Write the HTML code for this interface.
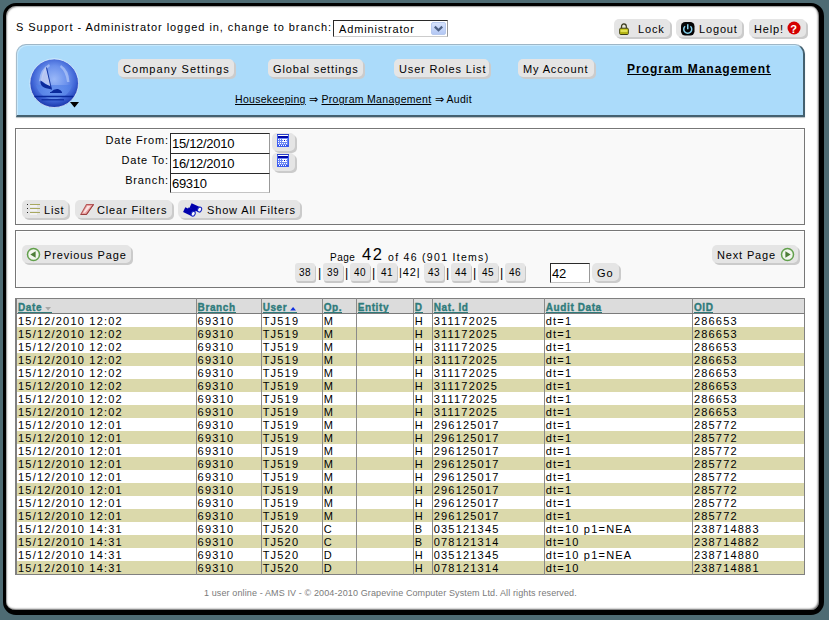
<!DOCTYPE html>
<html><head><meta charset="utf-8">
<style>
*{box-sizing:border-box;margin:0;padding:0}
html,body{width:829px;height:620px;overflow:hidden;background:#4e6b73;font-family:"Liberation Sans",sans-serif;color:#000}
.abs{position:absolute;white-space:nowrap}
#win{position:absolute;left:3px;top:3px;width:821px;height:612px;background:#fff;border:solid #000;border-width:3px 5px 5px 3px;border-radius:13px;box-shadow:inset 1px 1px 1.5px rgba(0,0,0,.4),inset -1px -1px 2px rgba(0,0,0,.6)}
.t11{font-size:11px;letter-spacing:.85px}
.t10{font-size:10px;letter-spacing:.5px}
.btn{position:absolute;background:#e5e5e5;border-radius:5px;box-shadow:2px 2px 0 #cbcbcb;white-space:nowrap;font-size:11px;letter-spacing:.85px;line-height:18px}
#panel{position:absolute;left:16px;top:44px;width:789px;height:73px;background:#abdbfa;border:solid;border-color:#9fb6c6 #44606f #44606f #a6bccb;border-width:1px 2px 2px 1px;border-radius:10px 10px 0 0;box-shadow:inset 1px 1px 0 #c6e9fd,0 1px 1px rgba(40,60,70,.35)}
.box{position:absolute;left:15px;width:790px;background:#f9f9f9;border:1px solid #777;box-shadow:inset 1px 1px 0 #fff}
.inp{position:absolute;left:170px;width:100px;height:21px;background:#fff;border:1px solid #2a2a2a;border-right-color:#999;border-bottom-color:#c4c4c4;font-size:13px;letter-spacing:-.3px;line-height:19px;padding-left:1px}
.cal{position:absolute;left:272px;width:23px;height:18px;background:#e5e5e5;border-radius:5px;box-shadow:2px 2px 0 #cbcbcb}
.pg{position:absolute;top:263px;width:20px;height:18px;background:#e5e5e5;border-radius:3px;box-shadow:1px 2px 0 #c8c8c8;font-size:10px;letter-spacing:.5px;line-height:19px;text-align:center}
.sep{position:absolute;top:266px;font-size:12.5px}
table{position:absolute;left:15px;top:298px;width:790px;border-collapse:collapse;table-layout:fixed;border-top:1px solid #808080;border-right:1px solid #808080;border-bottom:1px solid #808080}
td,th{padding:1px 0 0 1px;height:13px;line-height:12px;font-size:11px;letter-spacing:1.2px;white-space:nowrap;overflow:hidden;text-align:left;font-weight:normal;border-left:1px solid #8a8a8a;vertical-align:top}
td:first-child,th:first-child{border-left:2px solid #808080}
th{height:14px;line-height:11px;padding-top:3px;background:#dcdcdc;border-bottom:1px solid #7b7b7b;font-weight:bold;font-size:10px;letter-spacing:.6px;color:#2e7b7b;-webkit-text-stroke:.35px #2e7b7b}
th .h{display:inline-block;height:11px;line-height:11px;border-bottom:1px solid #2e7b7b;vertical-align:top}
th svg{vertical-align:baseline}
.arr{font-size:8.5px;-webkit-text-stroke:0}
.arr.g{color:#9a9a9a}
.arr.b{color:#1030e0}
tr.k td{background:#dbd9ab}

</style></head><body>
<div id="win"></div>
<div class="abs t11" style="left:16px;top:21px;letter-spacing:.95px">S Support - Administrator logged in, change to branch:</div>
<div class="abs" style="left:333px;top:20px;width:115px;height:17px;background:#fff;border:1px solid #2a2a2a;border-right-color:#999;border-bottom-color:#ccc"><span class="t11" style="position:absolute;left:5px;top:2px">Administrator</span>
<div style="position:absolute;left:97px;top:1px;width:15px;height:13px;background:linear-gradient(#d6e2fb,#b4c8f4);border:1px solid #b7c9ee;border-radius:2px"><svg width="13" height="11" style="position:absolute;left:0;top:0"><path d="M2.8 3.6 L6.5 7.3 L10.2 3.6" fill="none" stroke="#4d6185" stroke-width="2.2"/></svg></div></div>

<div class="btn" style="left:614px;top:19px;width:56px;height:18px">
<svg width="11" height="13" style="position:absolute;left:5px;top:4px"><path d="M2.6 5.5 V3.6 A2.3 2.6 0 0 1 7.2 3.6 V5.5" fill="none" stroke="#3a3a20" stroke-width="1.4"/><path d="M3.4 5 V3.8 A1.5 1.8 0 0 1 6.4 3.8 V5" fill="none" stroke="#e8e8c0" stroke-width=".6"/><rect x="0.7" y="5.2" width="8.6" height="6.3" rx="1" fill="#c9c91c" stroke="#3c3c10" stroke-width="1"/><rect x="1.5" y="7.3" width="7" height="1.3" fill="#eeee70"/><rect x="1.5" y="9.5" width="7" height="1" fill="#a0a010"/></svg>
<span style="position:absolute;left:24px;top:1px">Lock</span></div>
<div class="btn" style="left:676px;top:19px;width:66px;height:18px">
<svg width="14" height="14" style="position:absolute;left:5px;top:2.5px"><rect x="0" y="0" width="13.5" height="13.5" rx="4.2" fill="#050505"/><path d="M4.1 4.3 A4 4 0 1 0 9.4 4.3" fill="none" stroke="#86d4f0" stroke-width="1.5"/><path d="M6.75 2.3 V7.2" stroke="#86d4f0" stroke-width="1.5"/></svg>
<span style="position:absolute;left:23px;top:1px">Logout</span></div>
<div class="btn" style="left:749px;top:19px;width:57px;height:18px">
<span style="position:absolute;left:5px;top:1px">Help!</span>
<svg width="14" height="14" style="position:absolute;left:38px;top:2px"><circle cx="7" cy="7" r="6.5" fill="#d40000"/><text x="7" y="11.5" font-family="Liberation Sans" font-weight="bold" font-size="11" fill="#fff" text-anchor="middle">?</text></svg></div>

<div id="panel"></div>
<svg width="52" height="52" style="position:absolute;left:28px;top:57px" viewBox="0 0 52 52">
<defs>
<radialGradient id="gl" cx="50%" cy="42%" r="56%"><stop offset="0" stop-color="#9ab8f8"/><stop offset=".5" stop-color="#6a90ec"/><stop offset=".8" stop-color="#3d62d4"/><stop offset="1" stop-color="#1f3cb0"/></radialGradient>
<linearGradient id="gb" x1="0" y1="0" x2="0" y2="1"><stop offset="0" stop-color="#4d7de6"/><stop offset="1" stop-color="#6d9cf2"/></linearGradient>
</defs>
<circle cx="26.2" cy="26.2" r="24.3" fill="url(#gl)" stroke="#f0f8ff" stroke-width="0.7"/>
<path d="M8 28 A18.5 18.5 0 0 0 44 28 Z" fill="url(#gb)" opacity=".6"/>
<path d="M11 24 Q12 12 21 7 L22 9 Q15 14 14 25Z" fill="#c8d8fb" opacity=".55"/>
<path d="M33 8 Q41 13 41.5 25 L39 25 Q38 15 32 10Z" fill="#c8d8fb" opacity=".55"/>
<path d="M17.9 10.3 L23 30.5 L13 23.4 Q14 15 17.9 10.3Z" fill="#c6d0f2" opacity=".8"/>
<path d="M12.6 23.6 Q11 31 23.5 32.4 L23 29.6 Q17.5 28 12.6 23.6Z" fill="#0a2a9c"/>
<path d="M18.5 10.5 L23.5 32.5" stroke="#0a2a9c" stroke-width="0.9"/>
<path d="M23 35 Q26 31.5 30 32 Q33 33 34 35 Z" fill="#0a2a9c"/>
<path d="M22 35.5 H34" stroke="#0a2a9c" stroke-width="1"/>
<path d="M6.5 39.5 H45" stroke="#0a2a9c" stroke-width="1.4"/>
<path d="M13.5 42.8 H36" stroke="#0a2a9c" stroke-width="1.2"/>
</svg>
<svg width="10" height="6" style="position:absolute;left:70px;top:102px"><path d="M0 0 H9 L4.5 5.5Z" fill="#000"/></svg>

<div class="btn" style="left:118px;top:59px;width:116px;height:18px"><span style="position:absolute;left:5px;top:1px;letter-spacing:1.05px">Company Settings</span></div>
<div class="btn" style="left:268px;top:59px;width:95px;height:18px"><span style="position:absolute;left:5px;top:1px">Global settings</span></div>
<div class="btn" style="left:394px;top:59px;width:95px;height:18px"><span style="position:absolute;left:5px;top:1px">User Roles List</span></div>
<div class="btn" style="left:518px;top:59px;width:76px;height:18px"><span style="position:absolute;left:5px;top:1px">My Account</span></div>
<div class="abs" style="left:627px;top:62px;font-size:12px;font-weight:bold;letter-spacing:1px;text-decoration:underline;text-underline-offset:1px">Program Management</div>
<div class="abs" style="left:235px;top:93px;font-size:10.5px;letter-spacing:.3px"><u>Housekeeping</u> <span style="font-size:11px">&#8658;</span> <u>Program Management</u> <span style="font-size:11px">&#8658;</span> Audit</div>

<div class="box" style="top:128px;height:97px"></div>
<div class="abs t11" style="right:660px;top:134px">Date From:</div>
<div class="abs t11" style="right:660px;top:154px">Date To:</div>
<div class="abs t11" style="right:660px;top:174px">Branch:</div>
<div class="inp" style="top:133px">15/12/2010</div>
<div class="inp" style="top:153px">16/12/2010</div>
<div class="inp" style="top:173px;height:20px">69310</div>
<div class="cal" style="top:133px"><svg width="12" height="13" shape-rendering="crispEdges" style="position:absolute;left:5px;top:1px"><rect x="0" y="0" width="12" height="13" fill="#3d5df0"/><rect x="0" y="0" width="12" height="1" fill="#2a40c8"/><rect x="1" y="1" width="10" height="1" fill="#fff"/><rect x="1" y="2" width="10" height="2" fill="#0008a8"/><rect x="1" y="4" width="10" height="8" fill="#6a86f4"/><g fill="#fff"><rect x="1" y="5" width="1" height="1"/><rect x="3" y="5" width="1" height="1"/><rect x="5" y="5" width="1" height="1"/><rect x="9" y="5" width="1" height="1"/><rect x="1" y="7" width="1" height="1"/><rect x="3" y="7" width="1" height="1"/><rect x="5" y="7" width="1" height="1"/><rect x="9" y="7" width="1" height="1"/><rect x="1" y="9" width="1" height="1"/><rect x="3" y="9" width="1" height="1"/><rect x="5" y="9" width="1" height="1"/><rect x="7" y="9" width="1" height="1"/><rect x="9" y="9" width="1" height="1"/><rect x="6" y="5" width="3" height="1"/><rect x="6" y="7" width="3" height="1"/><rect x="6" y="6" width="1" height="1"/><rect x="8" y="6" width="1" height="1"/></g><rect x="7" y="6" width="1" height="1" fill="#0008c0"/><rect x="1" y="11" width="10" height="1" fill="#3050e8"/><g fill="#fff"><rect x="2" y="11" width="1" height="1"/><rect x="4" y="11" width="1" height="1"/><rect x="6" y="11" width="1" height="1"/><rect x="8" y="11" width="1" height="1"/></g></svg></div>
<div class="cal" style="top:153px"><svg width="12" height="13" shape-rendering="crispEdges" style="position:absolute;left:5px;top:1px"><rect x="0" y="0" width="12" height="13" fill="#3d5df0"/><rect x="0" y="0" width="12" height="1" fill="#2a40c8"/><rect x="1" y="1" width="10" height="1" fill="#fff"/><rect x="1" y="2" width="10" height="2" fill="#0008a8"/><rect x="1" y="4" width="10" height="8" fill="#6a86f4"/><g fill="#fff"><rect x="1" y="5" width="1" height="1"/><rect x="3" y="5" width="1" height="1"/><rect x="5" y="5" width="1" height="1"/><rect x="9" y="5" width="1" height="1"/><rect x="1" y="7" width="1" height="1"/><rect x="3" y="7" width="1" height="1"/><rect x="5" y="7" width="1" height="1"/><rect x="9" y="7" width="1" height="1"/><rect x="1" y="9" width="1" height="1"/><rect x="3" y="9" width="1" height="1"/><rect x="5" y="9" width="1" height="1"/><rect x="7" y="9" width="1" height="1"/><rect x="9" y="9" width="1" height="1"/><rect x="6" y="5" width="3" height="1"/><rect x="6" y="7" width="3" height="1"/><rect x="6" y="6" width="1" height="1"/><rect x="8" y="6" width="1" height="1"/></g><rect x="7" y="6" width="1" height="1" fill="#0008c0"/><rect x="1" y="11" width="10" height="1" fill="#3050e8"/><g fill="#fff"><rect x="2" y="11" width="1" height="1"/><rect x="4" y="11" width="1" height="1"/><rect x="6" y="11" width="1" height="1"/><rect x="8" y="11" width="1" height="1"/></g></svg></div>

<div class="btn" style="left:22px;top:200px;width:46px;height:18px">
<svg width="14" height="12" style="position:absolute;left:4px;top:3px"><g fill="#222"><rect x="1" y="1" width="1" height="1"/><rect x="1" y="5" width="1" height="1"/><rect x="1" y="9" width="1" height="1"/></g><g fill="#a8a860"><rect x="4" y="1" width="10" height="1"/><rect x="4" y="5" width="10" height="1"/><rect x="4" y="9" width="10" height="1"/></g><g fill="#fff"><rect x="4" y="2.5" width="7" height="1"/><rect x="4" y="6.5" width="7" height="1"/><rect x="4" y="10.5" width="7" height="1"/></g></svg>
<span style="position:absolute;left:22px;top:1px">List</span></div>
<div class="btn" style="left:75px;top:200px;width:97px;height:18px">
<svg width="15" height="13" style="position:absolute;left:5px;top:3px"><path d="M6.5 1.5 L13.5 1.5 L6.5 11.5 L0.8 11.5 Z" fill="#e9a2a2" stroke="#b55858" stroke-width="1.1" stroke-linejoin="round"/><path d="M7.3 3 L10.8 3 L5 9.8 L3 9.8Z" fill="#fbe2e2"/><path d="M0.8 11.5 L6.5 11.5 L13.5 1.5" fill="none" stroke="#9a4040" stroke-width="1"/></svg>
<span style="position:absolute;left:22px;top:1px">Clear Filters</span></div>
<div class="btn" style="left:178px;top:200px;width:122px;height:18px">
<svg width="20" height="15" style="position:absolute;left:5px;top:2px"><path d="M7.5 3.6 L16.3 7.6" stroke="#0000ac" stroke-width="5.2"/><path d="M1.2 7.6 L10 11.8" stroke="#0000ac" stroke-width="5.2"/><path d="M5 7 L12.5 9" stroke="#0000ac" stroke-width="3"/><ellipse cx="16.6" cy="7.6" rx="1.9" ry="2.5" fill="#fafaff" stroke="#1a28c0" stroke-width="1.1" transform="rotate(25 16.6 7.6)"/><ellipse cx="10.2" cy="11.8" rx="1.9" ry="2.5" fill="#fafaff" stroke="#1a28c0" stroke-width="1.1" transform="rotate(25 10.2 11.8)"/></svg>
<span style="position:absolute;left:29px;top:1px">Show All Filters</span></div>

<div class="box" style="top:230px;height:58px"></div>
<div class="btn" style="left:22px;top:245px;width:109px;height:18px">
<svg width="15" height="15" style="position:absolute;left:4px;top:2px"><circle cx="7.5" cy="7.5" r="6" fill="#f2f6ee" stroke="#62a04c" stroke-width="1.5"/><path d="M4.3 7.5 L9.6 4.2 V10.8Z" fill="#4d7d38"/></svg>
<span style="position:absolute;left:22px;top:1px">Previous Page</span></div>
<div class="btn" style="left:712px;top:245px;width:86px;height:18px">
<span style="position:absolute;left:5px;top:1px">Next Page</span>
<svg width="15" height="15" style="position:absolute;left:68px;top:2px"><circle cx="7.5" cy="7.5" r="6" fill="#f2f6ee" stroke="#62a04c" stroke-width="1.5"/><path d="M10.7 7.5 L5.4 4.2 V10.8Z" fill="#4d7d38"/></svg></div>
<div class="abs t10" style="left:330px;top:252px">Page</div>
<div class="abs" style="left:362px;top:245px;font-size:16.5px;letter-spacing:1.5px">42</div>
<div class="abs" style="left:388px;top:251px;font-size:10.5px;letter-spacing:1.3px">of 46 (901 Items)</div>
<div class="pg" style="left:295px">38</div><div class="sep" style="left:318px">|</div>
<div class="pg" style="left:323px">39</div><div class="sep" style="left:345px">|</div>
<div class="pg" style="left:350px">40</div><div class="sep" style="left:372px">|</div>
<div class="pg" style="left:377px">41</div>
<div class="abs" style="left:399px;top:266px;font-size:11px;letter-spacing:.9px">|42|</div>
<div class="pg" style="left:424px">43</div><div class="sep" style="left:446px">|</div>
<div class="pg" style="left:451px">44</div><div class="sep" style="left:473px">|</div>
<div class="pg" style="left:478px">45</div><div class="sep" style="left:500px">|</div>
<div class="pg" style="left:505px">46</div>
<div class="inp" style="left:550px;top:263px;width:40px;height:20px">42</div>
<div class="btn" style="left:592px;top:263px;width:27px;height:18px"><span style="position:absolute;left:5px;top:1px">Go</span></div>

<div class="abs" style="left:204px;top:588px;font-size:9px;letter-spacing:.12px;color:#7a7a7a">1 user online - AMS IV - &#169; 2004-2010 Grapevine Computer System Ltd. All rights reserved.</div>

<table><colgroup><col style="width:180px"><col style="width:65px"><col style="width:61px"><col style="width:34px"><col style="width:57px"><col style="width:19px"><col style="width:112px"><col style="width:148px"><col style="width:112px"></colgroup><tr><th><span class="h">Date<svg width="10" height="6"><path d="M3.2 2 H9 L6.1 5.5Z" fill="#a8a8a8"/></svg></span></th><th><span class="h">Branch</span></th><th><span class="h">User<svg width="10" height="6"><path d="M3.2 5.5 H9 L6.1 2Z" fill="#1030e0"/></svg></span></th><th><span class="h">Op.</span></th><th><span class="h">Entity</span></th><th><span class="h">D</span></th><th><span class="h">Nat. Id</span></th><th><span class="h">Audit Data</span></th><th><span class="h">OID</span></th></tr><tr><td>15/12/2010 12:02</td><td>69310</td><td>TJ519</td><td>M</td><td></td><td>H</td><td>311172025</td><td>dt=1</td><td>286653</td></tr><tr class="k"><td>15/12/2010 12:02</td><td>69310</td><td>TJ519</td><td>M</td><td></td><td>H</td><td>311172025</td><td>dt=1</td><td>286653</td></tr><tr><td>15/12/2010 12:02</td><td>69310</td><td>TJ519</td><td>M</td><td></td><td>H</td><td>311172025</td><td>dt=1</td><td>286653</td></tr><tr class="k"><td>15/12/2010 12:02</td><td>69310</td><td>TJ519</td><td>M</td><td></td><td>H</td><td>311172025</td><td>dt=1</td><td>286653</td></tr><tr><td>15/12/2010 12:02</td><td>69310</td><td>TJ519</td><td>M</td><td></td><td>H</td><td>311172025</td><td>dt=1</td><td>286653</td></tr><tr class="k"><td>15/12/2010 12:02</td><td>69310</td><td>TJ519</td><td>M</td><td></td><td>H</td><td>311172025</td><td>dt=1</td><td>286653</td></tr><tr><td>15/12/2010 12:02</td><td>69310</td><td>TJ519</td><td>M</td><td></td><td>H</td><td>311172025</td><td>dt=1</td><td>286653</td></tr><tr class="k"><td>15/12/2010 12:02</td><td>69310</td><td>TJ519</td><td>M</td><td></td><td>H</td><td>311172025</td><td>dt=1</td><td>286653</td></tr><tr><td>15/12/2010 12:01</td><td>69310</td><td>TJ519</td><td>M</td><td></td><td>H</td><td>296125017</td><td>dt=1</td><td>285772</td></tr><tr class="k"><td>15/12/2010 12:01</td><td>69310</td><td>TJ519</td><td>M</td><td></td><td>H</td><td>296125017</td><td>dt=1</td><td>285772</td></tr><tr><td>15/12/2010 12:01</td><td>69310</td><td>TJ519</td><td>M</td><td></td><td>H</td><td>296125017</td><td>dt=1</td><td>285772</td></tr><tr class="k"><td>15/12/2010 12:01</td><td>69310</td><td>TJ519</td><td>M</td><td></td><td>H</td><td>296125017</td><td>dt=1</td><td>285772</td></tr><tr><td>15/12/2010 12:01</td><td>69310</td><td>TJ519</td><td>M</td><td></td><td>H</td><td>296125017</td><td>dt=1</td><td>285772</td></tr><tr class="k"><td>15/12/2010 12:01</td><td>69310</td><td>TJ519</td><td>M</td><td></td><td>H</td><td>296125017</td><td>dt=1</td><td>285772</td></tr><tr><td>15/12/2010 12:01</td><td>69310</td><td>TJ519</td><td>M</td><td></td><td>H</td><td>296125017</td><td>dt=1</td><td>285772</td></tr><tr class="k"><td>15/12/2010 12:01</td><td>69310</td><td>TJ519</td><td>M</td><td></td><td>H</td><td>296125017</td><td>dt=1</td><td>285772</td></tr><tr><td>15/12/2010 14:31</td><td>69310</td><td>TJ520</td><td>C</td><td></td><td>B</td><td>035121345</td><td>dt=10 p1=NEA</td><td>238714883</td></tr><tr class="k"><td>15/12/2010 14:31</td><td>69310</td><td>TJ520</td><td>C</td><td></td><td>B</td><td>078121314</td><td>dt=10</td><td>238714882</td></tr><tr><td>15/12/2010 14:31</td><td>69310</td><td>TJ520</td><td>D</td><td></td><td>H</td><td>035121345</td><td>dt=10 p1=NEA</td><td>238714880</td></tr><tr class="k"><td>15/12/2010 14:31</td><td>69310</td><td>TJ520</td><td>D</td><td></td><td>H</td><td>078121314</td><td>dt=10</td><td>238714881</td></tr></table>
</body></html>
